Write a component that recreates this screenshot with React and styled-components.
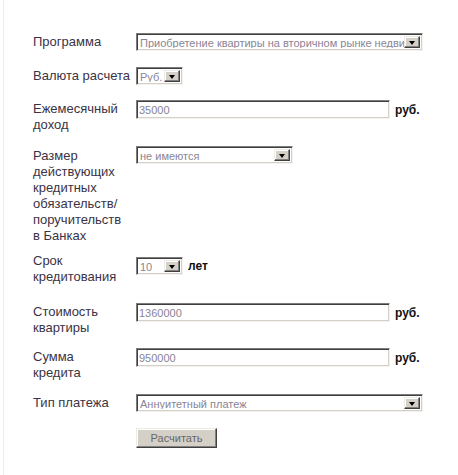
import React from 'react';
import styled, { createGlobalStyle } from 'styled-components';

const Global = createGlobalStyle`
  body {
    margin: 0;
    background: #fff;
    font-family: "Liberation Sans", Arial, sans-serif;
  }
`

const Page = styled.div`
  min-height: 475px;
  box-sizing: border-box;
  margin-left: 3px;
  border-left: 1px solid #f1eed6;
  padding: 33px 0 0 29px;
`

const Form = styled.form`
  display: flex;
  flex-direction: column;
`

const Row = styled.div`
  display: grid;
  grid-template-columns: 103px auto;
  align-items: start;
  padding-bottom: ${p => p.$gap || 0}px;
`

const Label = styled.div`
  margin-top: ${p => (p.$mt === undefined ? 1 : p.$mt)}px;
  font-size: 13px;
  line-height: 16px;
  color: #3b3345;
`

const Field = styled.div`
  display: flex;
  align-items: center;
  gap: 5px;
  margin-top: ${p => p.$mt || 0}px;
`

const sunken = `
  box-sizing: border-box;
  border: 1px solid;
  border-color: #7c7c7c #f4f2ee #f4f2ee #7c7c7c;
  box-shadow: inset 1px 1px 0 #3f3f3f, inset -1px -1px 0 #d4d0c8;
  background: #fff;
`

const Input = styled.input`
  ${sunken}
  width: ${p => p.$w}px;
  height: 19px;
  padding: 1px 2px 0;
  margin: 0;
  font-family: "Liberation Sans", Arial, sans-serif;
  font-size: 11px;
  color: #8a8494;
  outline: none;
`

const SelectBox = styled.div`
  ${sunken}
  width: ${p => p.$w}px;
  height: 18px;
  padding: 2px;
  display: flex;
  align-items: stretch;
`

const SelectValue = styled.span`
  flex: 1;
  min-width: 0;
  overflow: hidden;
  white-space: nowrap;
  font-size: 11px;
  line-height: 14px;
  color: #8a8494;
  padding-left: 1px;
`

const ArrowButton = styled.span`
  box-sizing: border-box;
  width: 16px;
  flex: none;
  display: flex;
  align-items: center;
  justify-content: center;
  background: #d4d0c8;
  border: 1px solid;
  border-color: #eceae4 #404040 #404040 #eceae4;
  box-shadow: inset -1px -1px 0 #808080, inset 1px 1px 0 #fff;

  &::after {
    content: "";
    width: 0;
    height: 0;
    margin-top: 1px;
    border-left: 3.5px solid transparent;
    border-right: 3.5px solid transparent;
    border-top: 4px solid #000;
  }
`

const Unit = styled.span`
  font-size: 12px;
  font-weight: bold;
  color: #111;
`

const Button = styled.button`
  box-sizing: border-box;
  width: 81px;
  height: 20px;
  padding: 0;
  margin: 0;
  background: #d4d0c8;
  border: 1px solid;
  border-color: #eceae4 #404040 #404040 #eceae4;
  box-shadow: inset -1px -1px 0 #808080, inset 1px 1px 0 #fff;
  font-family: "Liberation Sans", Arial, sans-serif;
  font-size: 11px;
  color: #666;
  cursor: pointer;
`

function Select({ w, value }) {
  return (
    <SelectBox $w={w}>
      <SelectValue>{value}</SelectValue>
      <ArrowButton />
    </SelectBox>
  )
}

export default function App() {
  return (
    <Page>
      <Global />
      <Form onSubmit={e => e.preventDefault()}>
        <Row $gap={16}>
          <Label>Программа</Label>
          <Field>
            <Select w={287} value="Приобретение квартиры на вторичном рынке недвижимости" />
          </Field>
        </Row>
        <Row $gap={15}>
          <Label>Валюта расчета</Label>
          <Field>
            <Select w={47} value="Руб." />
          </Field>
        </Row>
        <Row $gap={13}>
          <Label>Ежемесячный<br />доход</Label>
          <Field>
            <Input $w={254} defaultValue="35000" />
            <Unit>руб.</Unit>
          </Field>
        </Row>
        <Row $gap={8}>
          <Label $mt={2}>
            Размер<br />действующих<br />кредитных<br />обязательств/<br />поручительств<br />в Банках
          </Label>
          <Field>
            <Select w={157} value="не имеются" />
          </Field>
        </Row>
        <Row $gap={18}>
          <Label>Срок<br />кредитования</Label>
          <Field $mt={5}>
            <Select w={47} value="10" />
            <Unit>лет</Unit>
          </Field>
        </Row>
        <Row $gap={12}>
          <Label>Стоимость<br />квартиры</Label>
          <Field>
            <Input $w={254} defaultValue="1360000" />
            <Unit>руб.</Unit>
          </Field>
        </Row>
        <Row $gap={13}>
          <Label>Сумма<br />кредита</Label>
          <Field>
            <Input $w={254} defaultValue="950000" />
            <Unit>руб.</Unit>
          </Field>
        </Row>
        <Row $gap={16}>
          <Label>Тип платежа</Label>
          <Field>
            <Select w={287} value="Аннуитетный платеж" />
          </Field>
        </Row>
        <Row>
          <div />
          <Field>
            <Button type="submit">Расчитать</Button>
          </Field>
        </Row>
      </Form>
    </Page>
  )
}
